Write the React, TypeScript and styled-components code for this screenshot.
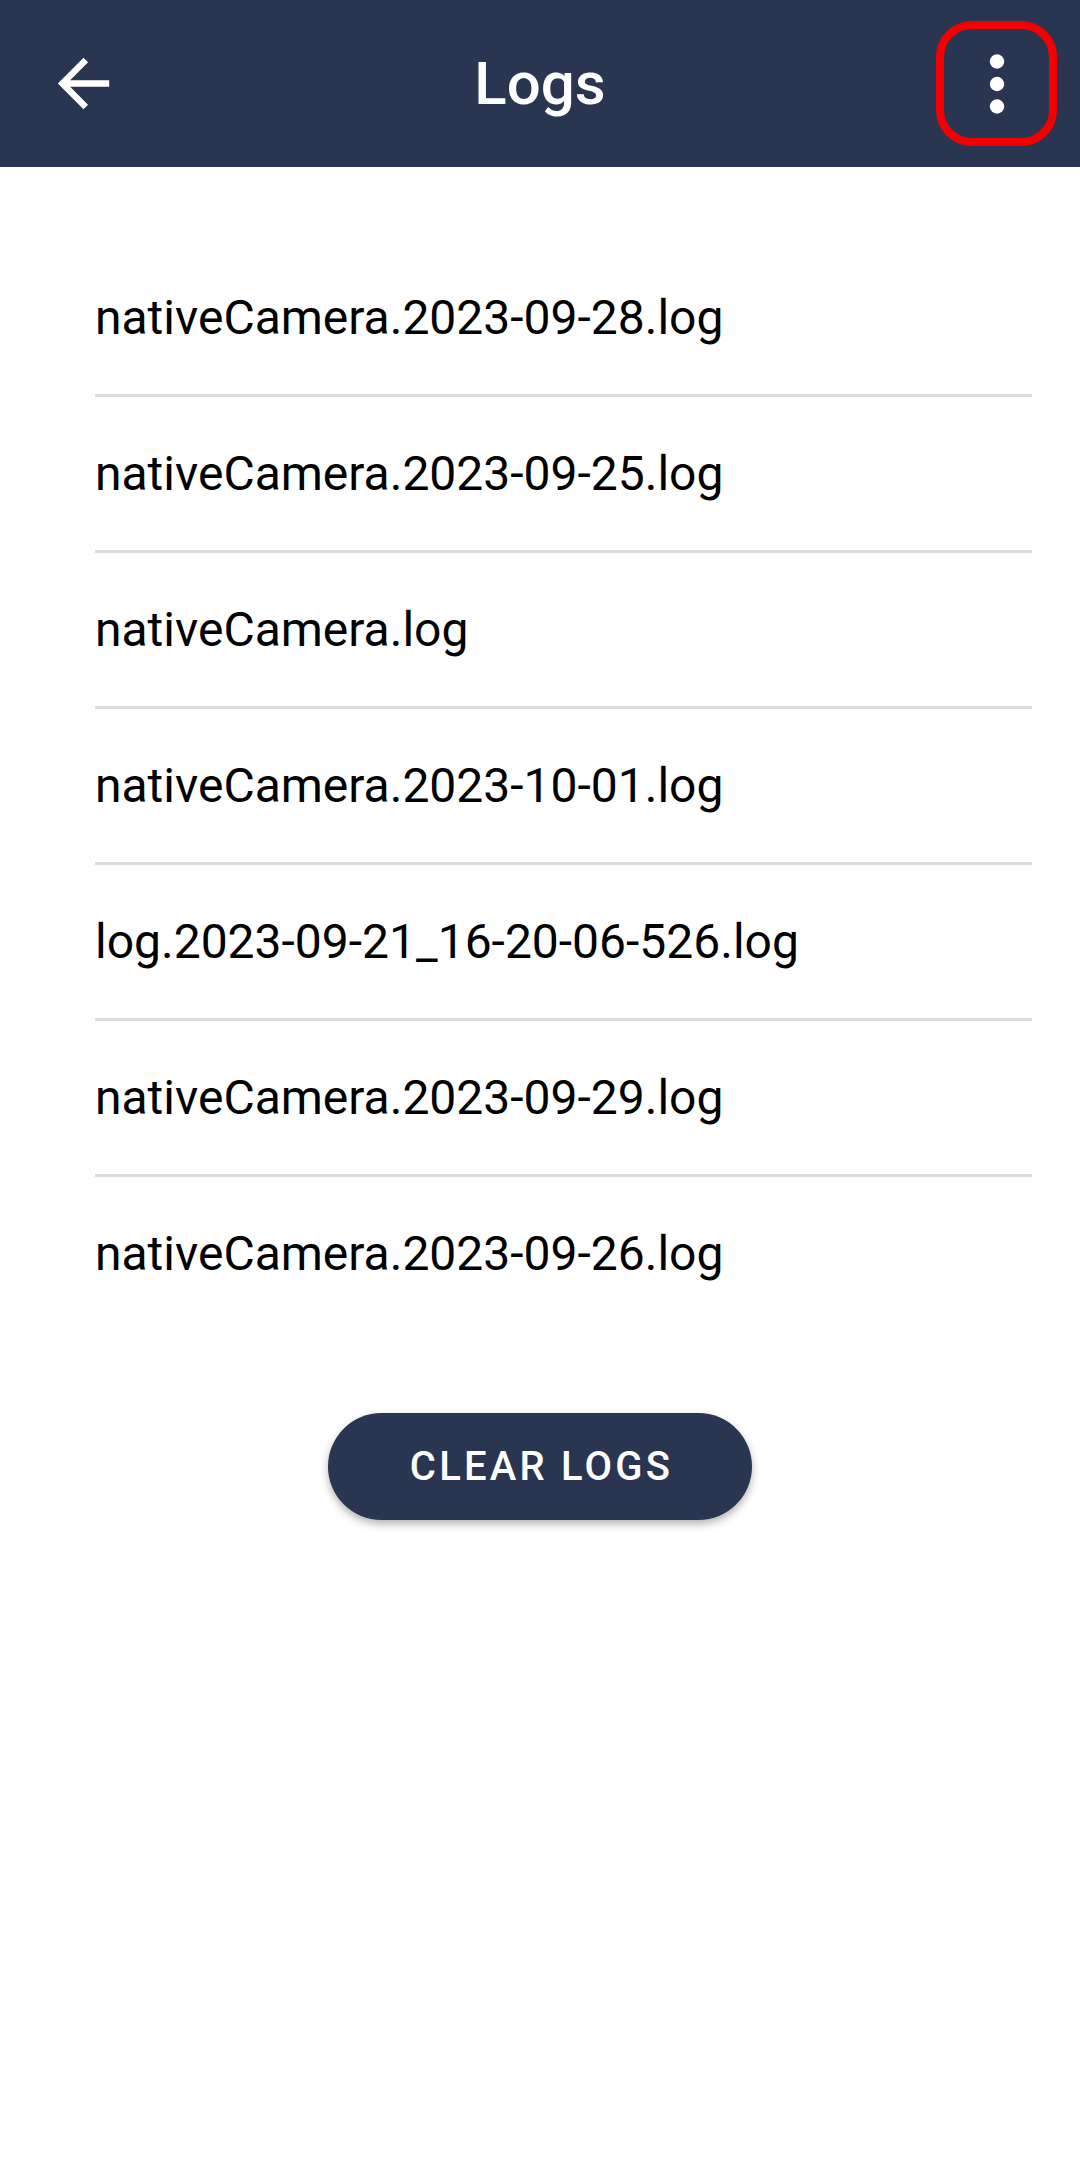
import React from 'react'
import styled, {createGlobalStyle} from 'styled-components'

const GlobalStyle = createGlobalStyle`
    html, body{
        margin: 0;
        padding: 0;
        background: #ffffff;
    }

    body{
        font-family: Roboto, "Noto Sans", "Liberation Sans", sans-serif;
        -webkit-font-smoothing: antialiased;
    }
`

const navy = '#2a3551'

const Screen = styled.div`
    min-height: 100vh;
    display: flex;
    flex-direction: column;
    background: #ffffff;
`

const Toolbar = styled.header`
    height: 167px;
    display: grid;
    grid-template-columns: 1fr auto 1fr;
    align-items: center;
    padding: 0 23px;
    background: ${navy};
    color: #ffffff;
`

const Title = styled.h1`
    margin: 0;
    font-size: 60px;
    font-weight: 500;
    line-height: 1;
`

const IconButton = styled.button<{$outlined?: boolean}>`
    justify-self: ${(p) => (p.$outlined ? 'end' : 'start')};
    display: flex;
    align-items: center;
    justify-content: center;
    box-sizing: border-box;
    width: ${(p) => (p.$outlined ? '121px' : '77px')};
    height: ${(p) => (p.$outlined ? '125px' : '77px')};
    margin-left: ${(p) => (p.$outlined ? '0' : '22px')};
    padding: 0;
    background: transparent;
    color: #ffffff;
    border: ${(p) => (p.$outlined ? '8px solid #f50000' : 'none')};
    border-radius: ${(p) => (p.$outlined ? '36px' : '0')};
    cursor: pointer;
`

const List = styled.ul`
    list-style: none;
    margin: 74px 48px 0 95px;
    padding: 0;
`

const Row = styled.li`
    height: 153px;
    display: flex;
    align-items: center;
    font-size: 48px;
    color: #000000;

    & + &{
        border-top: 3px solid #dcdcdc;
    }
`

const Actions = styled.div`
    display: flex;
    justify-content: center;
    margin-top: 83px;
`

const ClearButton = styled.button`
    width: 424px;
    height: 107px;
    padding: 0 0 0 3px;
    border: none;
    border-radius: 54px;
    background: ${navy};
    color: #ffffff;
    font-family: Roboto, "Noto Sans", "Liberation Sans", sans-serif;
    font-size: 40px;
    font-weight: 500;
    letter-spacing: 3.2px;
    text-transform: uppercase;
    box-shadow: 0px 4px 8px rgba(0, 0, 0, 0.3);
    cursor: pointer;
`

const logs = [
    'nativeCamera.2023-09-28.log',
    'nativeCamera.2023-09-25.log',
    'nativeCamera.log',
    'nativeCamera.2023-10-01.log',
    'log.2023-09-21_16-20-06-526.log',
    'nativeCamera.2023-09-29.log',
    'nativeCamera.2023-09-26.log',
]

const BackArrow = () => (
    <svg width="77" height="77" viewBox="0 0 24 24" fill="currentColor">
        <path d="M20 11H7.83l5.59-5.59L12 4l-8 8 8 8 1.41-1.41L7.83 13H20v-2z" />
    </svg>
)

const MoreVert = () => (
    <svg width="16" height="60" viewBox="0 0 16 60" fill="currentColor">
        <circle cx="8" cy="7.5" r="7.2" />
        <circle cx="8" cy="30" r="7.2" />
        <circle cx="8" cy="52.5" r="7.2" />
    </svg>
)

const App = () => {
    return (
        <Screen>
            <GlobalStyle />
            <Toolbar>
                <IconButton aria-label="Back">
                    <BackArrow />
                </IconButton>
                <Title>Logs</Title>
                <IconButton $outlined aria-label="More options">
                    <MoreVert />
                </IconButton>
            </Toolbar>

            <List>
                {logs.map((name) => (
                    <Row key={name}>{name}</Row>
                ))}
            </List>

            <Actions>
                <ClearButton>Clear logs</ClearButton>
            </Actions>
        </Screen>
    )
}

export default App
